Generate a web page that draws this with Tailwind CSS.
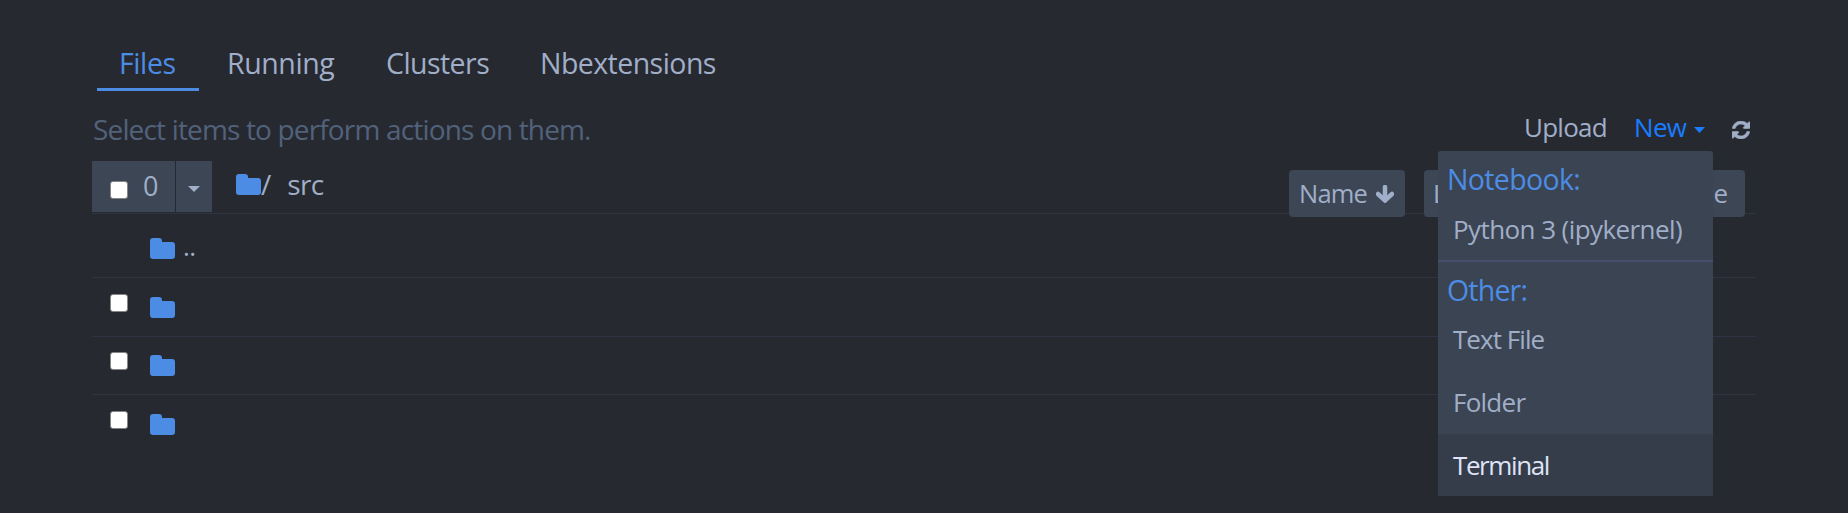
<!DOCTYPE html>
<html lang="en">
<head>
<meta charset="utf-8">
<title>src</title>
<script src="https://cdn.jsdelivr.net/npm/@tailwindcss/browser@4"></script>
</head>
<body class="bg-[#272931] text-[#a0aec8] font-['Open_Sans','Noto_Sans',sans-serif] h-[513px] overflow-hidden">
<svg class="hidden">
  <symbol id="folder" viewBox="0 0 25 21"><path d="M3 0H9Q12 0 12 3V4H22Q25 4 25 7V18Q25 21 22 21H3Q0 21 0 18V3Q0 0 3 0Z" fill="#4c8ce4"/></symbol>
</svg>
<main class="ml-[92px] w-[1664px] pt-[36px]">
  <nav class="ml-[5px] flex h-[55px] text-[28.5px] leading-[55px] whitespace-nowrap">
    <a class="w-[102px] border-b-3 border-[#4c8ce4] pl-[22px] text-[#4c8ce4]"><span class="tracking-[-0.4px]">Files</span></a>
    <a class="w-[159px] pl-[28px]"><span class="tracking-[-0.4px]">Running</span></a>
    <a class="w-[154px] pl-[28px]"><span class="tracking-[-0.55px]">Clusters</span></a>
    <a class="pl-[28px]"><span class="tracking-[-0.55px]">Nbextensions</span></a>
  </nav>
  <div class="flex h-[70px] justify-between whitespace-nowrap">
    <p class="pt-[18px] pl-px text-[28px] leading-[40px] text-[#51627a]"><span class="tracking-[-0.84px]">Select items to perform actions on them.</span></p>
    <div class="relative flex w-[233px] pt-[18px] text-[26px] leading-[37px]">
      <span class="w-[110px] pl-px"><span class="tracking-[-0.75px]">Upload</span></span>
      <span class="w-[50px] pl-px text-[#1a7cff]"><span class="tracking-[-0.7px]">New</span></span>
      <svg class="mt-[18px] ml-[11px] h-[6px] w-[11px]" viewBox="0 0 11 6"><path d="M0 0H11L5.5 6Z" fill="#1a7cff"/></svg>
      <svg class="mt-[12px] ml-[27px] h-[18px] w-[18px] shrink-0" viewBox="0 0 1536 1536"><path fill="#a0aec8" stroke="#a0aec8" stroke-width="50" d="M1511 928q0 5-1 7-64 268-268 434.500T764 1536q-146 0-282.500-55T238 1324l-129 129q-19 19-45 19t-45-19-19-45V960q0-26 19-45t45-19h448q26 0 45 19t19 45-19 45l-137 137q71 66 161 102t187 36q134 0 250-65t186-179q11-17 53-117 8-23 30-23h192q13 0 22.500 9.500t9.500 22.500zm25-800v448q0 26-19 45t-45 19h-448q-26 0-45-19t-19-45 19-45l138-138Q969 256 768 256q-134 0-250 65T332 500q-11 17-53 117-8 23-30 23H50q-13 0-22.500-9.500T18 608v-7q65-268 270-434.500T768 0q146 0 284 55.500T1297 212l130-129q19-19 45-19t45 19 19 45z"/></svg>
      <div class="absolute top-[60px] left-[-85px] z-10 h-[345px] w-[275px] rounded-t-[3px] bg-[#3b4452]">
        <h2 class="h-[54px] pt-[9px] pl-[9px] text-[28.5px] leading-[38px] text-[#4c8ce4]"><span class="tracking-[-0.65px]">Notebook:</span></h2>
        <div class="h-[55px] pl-[15px] pt-[5px] leading-[38px]"><span class="tracking-[-0.58px]">Python 3 (ipykernel)</span></div>
        <div class="h-[2px] bg-[#444f6d]"></div>
        <h2 class="h-[46px] pt-[9px] pl-[9px] text-[28.5px] leading-[38px] text-[#4c8ce4]"><span class="tracking-[-0.8px]">Other:</span></h2>
        <div class="h-[63px] pl-[15px] leading-[63px]"><span class="tracking-[-0.95px]">Text File</span></div>
        <div class="h-[63px] pl-[15px] leading-[63px]"><span class="tracking-[-0.75px]">Folder</span></div>
        <div class="h-[62px] bg-[#353d4b] pl-[15px] leading-[63px] text-[#dfe3f5]"><span class="tracking-[-1.4px]">Terminal</span></div>
      </div>
    </div>
  </div>
  <section>
    <header class="flex h-[53px] border-b border-[#2f3343] whitespace-nowrap">
      <div class="flex h-[51px] w-[83px] bg-[#3d4655] pt-[20px] pl-[18px]">
        <i class="h-[18px] w-[18px] rounded-[3px] border border-[#858585] bg-white"></i>
        <span class="ml-[15px] -mt-[14px] text-[27px] leading-[37px]">0</span>
      </div>
      <div class="ml-px h-[51px] w-[36px] bg-[#3d4655] pt-[25px] pl-[12px]"><svg class="h-[6px] w-[12px]" viewBox="0 0 12 6"><path d="M0 0H12L6 6Z" fill="#a0aec8"/></svg></div>
      <svg class="mt-[13px] ml-[24px] h-[21px] w-[25px]"><use href="#folder"/></svg>
      <span class="mt-[4px] text-[28px] leading-[38px]">/</span>
      <span class="mt-[4px] ml-[16px] text-[28px] leading-[38px]"><span class="tracking-[-0.7px]">src</span></span>
      <div class="mt-[9px] mr-[11px] ml-auto flex gap-[19px] text-[26px] leading-[46px]">
        <div class="flex h-[47px] w-[116px] rounded-[4px] bg-[#3d4655] pl-[10px]"><span class="w-[77px] text-[25.5px]"><span class="tracking-[-0.8px]">Name</span></span>
          <svg class="mt-[15px] h-[18px] w-[18px]" viewBox="0 0 18 18" fill="none" stroke="#a0aec8" stroke-width="4.5" stroke-linecap="round"><path d="M9 2V14M2 9L9 15.500L16 9"/></svg></div>
        <div class="h-[47px] w-[175px] rounded-[4px] bg-[#3d4655] pl-[9px]"><span class="tracking-[-0.7px]">Last Modified</span></div>
        <div class="h-[47px] w-[127px] rounded-[4px] bg-[#3d4655] pr-[17px] text-right"><span class="tracking-[0px]">File size</span></div>
      </div>
    </header>
    <div class="flex h-[64px] border-b border-[#2f3343] pt-[24px] pl-[58px]">
      <svg class="h-[21px] w-[25px]"><use href="#folder"/></svg><span class="-mt-[11px] ml-[8px] text-[26px] leading-[38px] tracking-[-0.5px]">..</span>
    </div>
    <div class="flex h-[59px] border-b border-[#2f3343] pt-[16px] pl-[18px]"><i class="h-[18px] w-[18px] rounded-[3px] border border-[#858585] bg-white"></i><svg class="mt-[3px] ml-[22px] h-[21px] w-[25px]"><use href="#folder"/></svg></div>
    <div class="flex h-[58px] border-b border-[#2f3343] pt-[15px] pl-[18px]"><i class="h-[18px] w-[18px] rounded-[3px] border border-[#858585] bg-white"></i><svg class="mt-[3px] ml-[22px] h-[21px] w-[25px]"><use href="#folder"/></svg></div>
    <div class="flex h-[59px] pt-[16px] pl-[18px]"><i class="h-[18px] w-[18px] rounded-[3px] border border-[#858585] bg-white"></i><svg class="mt-[3px] ml-[22px] h-[21px] w-[25px]"><use href="#folder"/></svg></div>
  </section>
</main>
</body>
</html>
